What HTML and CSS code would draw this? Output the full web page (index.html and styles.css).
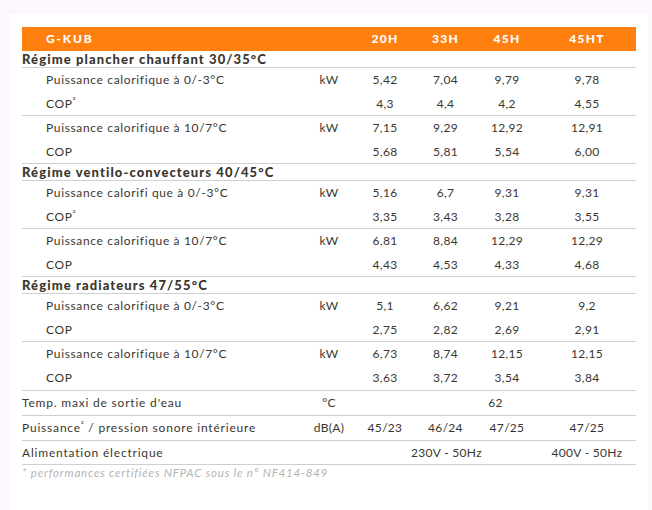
FILE: index.html
```html
<!DOCTYPE html>
<html lang="fr">
<head>
<meta charset="utf-8">
<title>G-KUB</title>
<link rel="stylesheet" href="styles.css">
</head>
<body>
<div class="card">
  <table class="spec">
    <colgroup>
      <col class="c-label"><col class="c-unit"><col class="c-v1"><col class="c-v2"><col class="c-v3"><col class="c-v4">
    </colgroup>
    <thead>
      <tr class="head">
        <th class="name">G-KUB</th><th></th><th>20H</th><th>33H</th><th>45H</th><th>45HT</th>
      </tr>
    </thead>
    <tbody>
      <tr class="section"><td colspan="6">Régime plancher chauffant 30/35°C</td></tr>
      <tr class="first"><td class="sub">Puissance calorifique à 0/-3°C</td><td class="unit">kW</td><td>5,42</td><td>7,04</td><td>9,79</td><td>9,78</td></tr>
      <tr class="last"><td class="sub">COP<sup>²</sup></td><td class="unit"></td><td>4,3</td><td>4,4</td><td>4,2</td><td>4,55</td></tr>
      <tr class="first"><td class="sub">Puissance calorifique à 10/7°C</td><td class="unit">kW</td><td>7,15</td><td>9,29</td><td>12,92</td><td>12,91</td></tr>
      <tr class="last"><td class="sub">COP</td><td class="unit"></td><td>5,68</td><td>5,81</td><td>5,54</td><td>6,00</td></tr>

      <tr class="section"><td colspan="6">Régime ventilo-convecteurs 40/45°C</td></tr>
      <tr class="first"><td class="sub">Puissance calorifi que à 0/-3°C</td><td class="unit">kW</td><td>5,16</td><td>6,7</td><td>9,31</td><td>9,31</td></tr>
      <tr class="last"><td class="sub">COP<sup>²</sup></td><td class="unit"></td><td>3,35</td><td>3,43</td><td>3,28</td><td>3,55</td></tr>
      <tr class="first"><td class="sub">Puissance calorifique à 10/7°C</td><td class="unit">kW</td><td>6,81</td><td>8,84</td><td>12,29</td><td>12,29</td></tr>
      <tr class="last"><td class="sub">COP</td><td class="unit"></td><td>4,43</td><td>4,53</td><td>4,33</td><td>4,68</td></tr>

      <tr class="section"><td colspan="6">Régime radiateurs 47/55°C</td></tr>
      <tr class="first"><td class="sub">Puissance calorifique à 0/-3°C</td><td class="unit">kW</td><td>5,1</td><td>6,62</td><td>9,21</td><td>9,2</td></tr>
      <tr class="last"><td class="sub">COP</td><td class="unit"></td><td>2,75</td><td>2,82</td><td>2,69</td><td>2,91</td></tr>
      <tr class="first"><td class="sub">Puissance calorifique à 10/7°C</td><td class="unit">kW</td><td>6,73</td><td>8,74</td><td>12,15</td><td>12,15</td></tr>
      <tr class="last tall"><td class="sub">COP</td><td class="unit"></td><td>3,63</td><td>3,72</td><td>3,54</td><td>3,84</td></tr>

      <tr class="single"><td class="lbl">Temp. maxi de sortie d'eau</td><td class="unit">°C</td><td colspan="4">62</td></tr>
      <tr class="single"><td class="lbl">Puissance<sup>²</sup> / pression sonore intérieure</td><td class="unit">dB(A)</td><td>45/23</td><td>46/24</td><td>47/25</td><td>47/25</td></tr>
      <tr class="single short"><td class="lbl">Alimentation électrique</td><td class="unit"></td><td colspan="3">230V - 50Hz</td><td>400V - 50Hz</td></tr>
    </tbody>
  </table>
  <p class="note">* performances certifiées NFPAC sous le n° NF414-849</p>
</div>
</body>
</html>
```

FILE: styles.css
```css
html, body {
  margin: 0;
  padding: 0;
}
body {
  background: #fcf7fc;
  width: 652px;
  height: 510px;
  overflow: hidden;
  font-family: Lato, "Open Sans", sans-serif;
  color: #3a372f;
}
.card {
  background: #ffffff;
  margin: 14px 4px 0 9px;
  padding: 13px 12px 0 13px;
  height: 496px;
  box-sizing: border-box;
}
.spec {
  width: 614px;
  table-layout: fixed;
  border-collapse: separate;
  border-spacing: 0;
  font-size: 12px;
}
.c-label { width: 281px; }
.c-unit { width: 52px; }
.c-v1 { width: 60px; }
.c-v2 { width: 61px; }
.c-v3 { width: 62px; }
.c-v4 { width: 98px; }

.spec th, .spec td {
  padding: 0;
  text-align: center;
  white-space: nowrap;
  letter-spacing: 0.3px;
}
.head th {
  background: #ff7f0f;
  color: #ffffff;
  font-weight: 900;
  height: 24px;
  line-height: 24px;
  letter-spacing: 1.2px;
}
.head th.name {
  text-align: left;
  padding-left: 24px;
  letter-spacing: 1.8px;
}
.section td {
  text-align: left;
  font-weight: 900;
  font-size: 13px;
  line-height: 16px;
  height: 16px;
  letter-spacing: 1.1px;
  border-bottom: 1px solid #cfcfcf;
}
.first td {
  line-height: 24px;
  height: 24px;
}
.last td {
  line-height: 23px;
  height: 23px;
  border-bottom: 1px solid #cfcfcf;
}
.last.tall td {
  line-height: 24px;
  height: 24px;
}
.single td {
  line-height: 24px;
  height: 24px;
  border-bottom: 1px solid #cfcfcf;
}
.single.short td {
  line-height: 23px;
  height: 23px;
}
.spec td.lbl {
  text-align: left;
  letter-spacing: 0.8px;
}
.spec td.sub {
  text-align: left;
  padding-left: 24px;
  letter-spacing: 0.65px;
}
.spec td.unit {
  text-align: center;
}
sup {
  font-size: 8px;
  line-height: 0;
  vertical-align: 4px;
}
.note {
  margin: 1px 0 0;
  font-size: 11.5px;
  font-style: italic;
  color: #b3b3b3;
  letter-spacing: 0.8px;
}
```
